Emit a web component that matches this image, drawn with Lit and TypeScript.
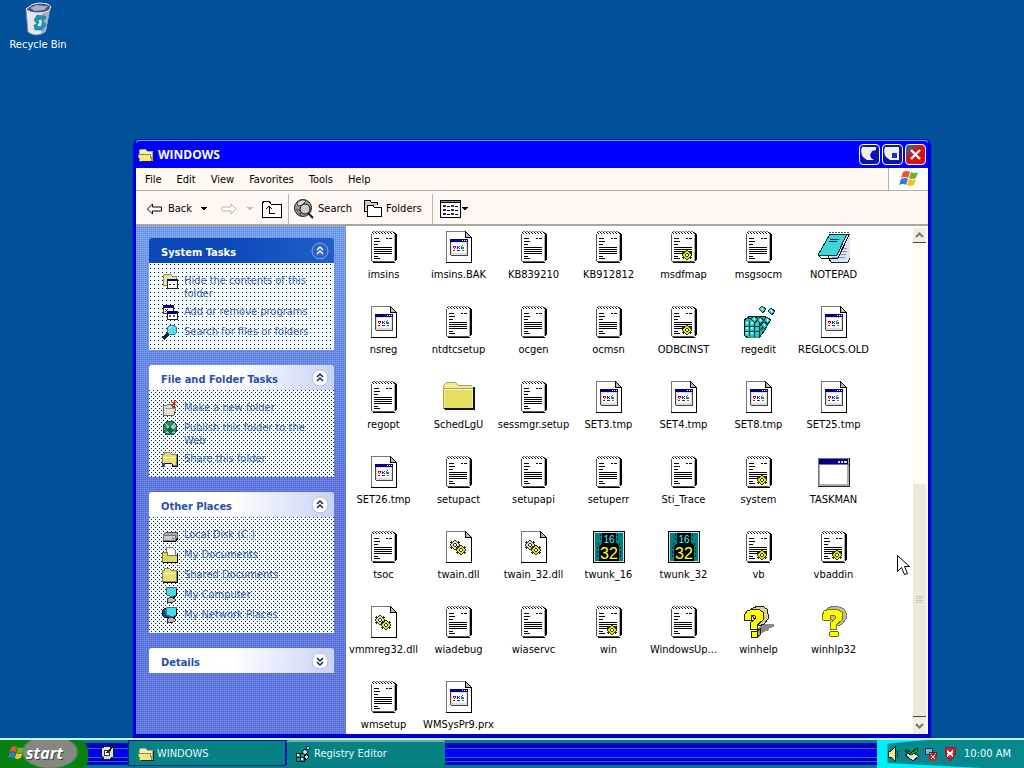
import { LitElement, html, svg, css, TemplateResult } from "lit";
import { customElement, property } from "lit/decorators.js";

const gear = (x: number, y: number, fill: string) => svg`
  <g transform="translate(${x} ${y})">
    <path d="M4 0h2v1h1v1h1v-1h1v1h1v1h-1v1h1v2h-1v1h1v1h-1v1h-1v-1h-1v1h-1v1h-2v-1h-1v-1h-1v1h-1v-1h-1v-1h1v-1h-1v-2h1v-1h-1v-1h1v-1h1v1h1v-1h1z" fill="#333300"/>
    <path d="M4 1h2v1h1v1h1v1h1v2h-1v1h-1v1h-1v1h-2v-1h-1v-1h-1v-1h-1v-2h1v-1h1v-1h1z" fill="${fill}"/>
    <path d="M4 3h2v1h1v2h-1v1h-2v-1h-1v-2h1z" fill="#333300"/>
    <path d="M4 4h2v2h-2z" fill="#fff"/>
  </g>`;

const notePage = svg`
  <path d="M3 3h24v27h-24z" fill="#fff"/>
  <path d="M3 3h1v27h-1zM4 30h22v1h-22z" fill="#555"/>
  <path d="M27 2h1v28h-1zM28 3h1v26h-1zM5 31h22v1h-22z" fill="#000"/>
  <path d="M26 4h1v26h-1z" fill="#aaa"/>
  <path d="M4 1h1v1h-1zM7 1h1v1h-1zM10 1h1v1h-1zM13 1h1v1h-1zM16 1h1v1h-1zM19 1h1v1h-1zM22 1h1v1h-1zM25 1h1v1h-1z
    M5 2h1v1h-1zM8 2h1v1h-1zM11 2h1v1h-1zM14 2h1v1h-1zM17 2h1v1h-1zM20 2h1v1h-1zM23 2h1v1h-1zM26 2h1v1h-1z" fill="#000"/>
  <path d="M5 0h2v1h-2zM8 0h2v1h-2zM11 0h2v1h-2zM14 0h2v1h-2zM17 0h2v1h-2zM20 0h2v1h-2zM23 0h2v1h-2zM26 1h1v1h-1z" fill="#777"/>
  <path d="M6 7h5v1h-5zM18 7h2v1h-2zM21 7h3v1h-3zM6 10h6v1h-6zM6 13h4v1h-4zM6 16h18v1h-18zM6 18h18v1h-18zM6 20h18v1h-18zM6 22h18v1h-18zM6 25h4v1h-4zM6 27h6v1h-6z" fill="#000"/>`;

const page = svg`
  <path d="M4 1h18l6 6v24h-24z" fill="#fff"/>
  <path d="M3 0h19v1h-18v30h-1z" fill="#777"/>
  <path d="M22 0h1v1h1v1h1v1h1v1h1v1h1v1h1v26h-26v-1h25v-24h-6z" fill="#000"/>
  <path d="M23 2h1v1h1v1h1v1h1v1h-4z" fill="#bbb"/>`;

const cube = (x: number, y: number) => svg`
  <path d="M${x} ${y + 3}l3-3l4 3l-3 4z" fill="#5cc" stroke="#044" stroke-width="1"/>
  <path d="M${x + 2} ${y + 3}l2-2v3z" fill="#dff"/>`;

const icons: Record<string, TemplateResult> = {
  text: notePage,
  config: svg`${notePage}${gear(14, 19, "#e6e600")}`,
  generic: svg`${page}
    <rect x="7" y="8" width="18" height="16" fill="#ddd"/>
    <path d="M7 8h18v3h-18z" fill="#000080"/>
    <path d="M19 9h1v1h-1zM21 9h1v1h-1zM23 9h1v1h-1z" fill="#fff"/>
    <rect x="9" y="12" width="14" height="10" fill="#fff"/>
    <path d="M7 11h1v13h-1zM24 11h1v14h-1zM8 24h17v1h-17z" fill="#444"/>
    <path d="M10 15h3v1h-3zM10 16h1v1h-1zM12 16h1v1h-1zM11 17h1v1h-1zM10 19h2v1h-2z" fill="#c00"/>
    <path d="M14 15h1v3h-1zM15 16h1v1h-1zM16 15h1v1h-1zM16 17h1v1h-1zM14 19h3v1h-3z" fill="#22c"/>
    <path d="M19 14h1v1h-1zM18 15h1v3h-1zM19 16h2v2h-2zM19 19h2v1h-2z" fill="#286"/>`,
  dll: svg`${page}${gear(7, 9, "#ddd")}${gear(13, 14, "#e2dc50")}`,
  folder: svg`
    <path d="M1 4h1v-1h1v-1h10v1h1v1h1v1h14v1h1v22h-29z" fill="#f0ee90"/>
    <path d="M2 8h27v19h-27z" fill="#e4df61"/>
    <path d="M0 4h1v24h-1zM1 3h1v1h-1zM2 2h1v1h-1zM3 1h10v1h-10zM13 2h1v1h-1zM14 3h1v1h-1zM15 4h14v1h-14zM1 7h29v1h-29z" fill="#a9a550"/>
    <path d="M30 6h2v22h-2zM2 28h30v1h-30zM1 27h29v1h-29z" fill="#111"/>
    <path d="M2 8h28v1h-28z" fill="#ffffc8"/>`,
  notepad: svg`
    <path d="M14 3h18v24l-2 4h-17l-3-5z" fill="#dde4f4" stroke="#222" stroke-width="1"/>
    <path d="M15 17h14M15 20h14M14 23h14M14 26h13" stroke="#88a" stroke-width="1"/>
    <path d="M12 3h17l-10 21h-19z" fill="#42d5d8" stroke="#033" stroke-width="1"/>
    <path d="M1 25l2 2h17l11-23" fill="none" stroke="#000" stroke-width="1"/>
    <path d="M12 8h9v1h-9zM11 10h8v1h-8z" fill="#024"/>
    <path d="M11 1h2v1h-2zM14 1h2v1h-2zM17 1h2v1h-2zM20 1h2v1h-2zM23 1h2v1h-2zM26 1h2v1h-2zM29 1h2v1h-2z" fill="#555"/>`,
  regedit: svg`
    <path d="M1 14l6-4h15v14l-6 8h-11l-4-3z" fill="#2aa7a8" stroke="#022" stroke-width="1"/>
    <path d="M2 15h14v15h-14z" fill="#37c4c4"/>
    <path d="M6 15v15M11 15v16M2 20h14M2 25h14M16 14v17M16 20l6-4M16 25l6-5M5 12h14" stroke="#044" stroke-width="1" fill="none"/>
    <path d="M3 16h2v2h-2zM8 16h2v2h-2zM3 21h2v2h-2zM8 21h2v2h-2zM3 26h2v2h-2zM8 26h2v2h-2z" fill="#8ff"/>
    ${cube(8, 10)}${cube(14, 11)}${cube(16, 0)}${cube(25, 2)}${cube(21, 11)}${cube(18, 16)}`,
  twunk: svg`
    <path d="M0 0h32v32h-32z" fill="#000"/>
    <path d="M1 1h30v30h-30z" fill="#cdd"/>
    <path d="M2 2h28v28h-28z" fill="#008080"/>
    <path d="M9 2h14v10l3 3v15h-20v-15l3-3z" fill="#000"/>
    <path d="M7 3h1v2h-1zM7 7h1v2h-1zM24 3h1v2h-1zM24 7h1v2h-1zM5 12h1v2h-1zM26 12h1v2h-1zM4 16h1v2h-1zM27 16h1v2h-1zM4 20h1v2h-1zM27 20h1v2h-1zM4 24h1v2h-1zM27 24h1v2h-1z" fill="#022"/>
    <text x="16" y="12" font-size="10" text-anchor="middle" fill="#4ff" font-family="Liberation Sans, sans-serif">16</text>
    <text x="16" y="28" font-size="16" text-anchor="middle" fill="#ff3" font-family="Liberation Sans, sans-serif">32</text>`,
  taskman: svg`
    <path d="M0 2h32v29h-32z" fill="#aaa"/>
    <path d="M1 3h29v5h-29z" fill="#000080"/>
    <path d="M20 5h2v2h-2zM23 5h2v2h-2zM26 5h3v2h-3z" fill="#ddd"/>
    <path d="M2 9h27v19h-27z" fill="#fff"/>
    <path d="M31 2h1v29h-1zM0 30h32v1h-32z" fill="#222"/>
    <path d="M0 2h1v28h-1zM1 2h30v1h-30zM1 8h30v1h-30z" fill="#777"/>`,
  help: svg`
    <path d="M13 23l9-5h9v3l-5 1v2l-10 4z" fill="#888"/>
    <path d="M6 5l4-3l5-2h4l5 3l1 5v5l-4 5l-5 2z" fill="#d4d49a" stroke="#222" stroke-width="1"/>
    <path d="M1 10l3-5l6-2h5l5 3l1 4l-1 4l-6 5v4h-7v-6l5-4v-3l-2-1l-2 1v4h-7z" fill="#ff0" stroke="#222" stroke-width="1"/>
    <path d="M8 25h6v6h-6z" fill="#ff0" stroke="#222" stroke-width="1"/>
    <path d="M14 25l3-2v6l-3 2z" fill="#998" stroke="#222" stroke-width="1"/>`,
  help32: svg`
    <path d="M6 6l4-4l5-2h4l7 3l2 4v6l-4 5l-4 2z" fill="#bdbda6" stroke="#777" stroke-width="1"/>
    <path d="M4 10l2-5l5-2h7l6 3l1 4l-1 4l-6 5v4h-6v-6l5-4v-3l-2-1l-3 1v4h-7z" fill="#ff0" stroke="#770" stroke-width="1"/>
    <ellipse cx="16" cy="28" rx="5" ry="3" fill="#ff0" stroke="#660"/>`,
};

const smallFolder = svg`
  <path d="M0 3h2v-2h5l2 2h5v11h-14z" fill="#e8e070" stroke="#886"/>
  <path d="M1 6h12" stroke="#ffc" fill="none"/>
  <path d="M15 4v11h-14" stroke="#000" fill="none"/>`;

const monitor = svg`
  <path d="M4 1l10-1v8l-3 2l-6-2z" fill="#3fe0f0" stroke="#567"/>
  <path d="M14 2v7l-3 2" fill="none" stroke="#000"/>
  <path d="M5 12l4-2l4 2v2l-4 2l-4-1z" fill="#bbb" stroke="#333"/>`;

const smallIcons: Record<string, TemplateResult> = {
  hide: svg`<path d="M1 3l2-2h5l2 2h4v9h-13z" fill="#e8e890" stroke="#886"/>
    <path d="M5 6h10v9h-10z" fill="#fff" stroke="#222"/><path d="M5 6h10v2h-10z" fill="#008"/>
    <path d="M7 11h2v1h-2zM11 11h2v1h-2z" fill="#222"/>`,
  programs: svg`<path d="M1 1h10v8h-10z" fill="#fff" stroke="#333"/><path d="M1 1h10v3h-10z" fill="#008"/>
    <path d="M3 5l3 3M6 5l-3 3" stroke="#c00"/><path d="M5 7h10v8h-10z" fill="#fff" stroke="#222"/>
    <path d="M5 7h10v3h-10z" fill="#008"/><path d="M7 11h2v2h-2z" fill="#c33"/><path d="M11 11h2v2h-2z" fill="#284"/>`,
  search: svg`<path d="M7 9l-6 6" stroke="#124" stroke-width="3"/><circle cx="10" cy="6" r="5" fill="#4fe0f0" stroke="#378"/>
    <path d="M7 5l3-3" stroke="#fff"/>`,
  newfolder: svg`<path d="M1 5h4l1-1h4v3h4l-2 8h-11z" fill="#e6e3d6" stroke="#665"/><path d="M3 8h11" stroke="#998"/>
    <path d="M12 0v7M9 1l6 5M15 1l-6 5" stroke="#d22"/>`,
  web: svg`<circle cx="8" cy="8" r="7" fill="#2b8f55" stroke="#254"/><path d="M3 3l5 4l5-4l1 4l-4 3l3 3h-9l2-4z" fill="#9cc"/>
    <path d="M4 10l4-3l4 3l-4 4z" fill="#175f33"/>`,
  share: svg`${smallFolder}<path d="M0 12h6l4 1v3h-10z" fill="#eef" stroke="#114"/><path d="M0 12h3v4h-3z" fill="#24a"/>`,
  disk: svg`<path d="M1 8l3-3h11v6l-2 2h-12z" fill="#aaa" stroke="#555"/><path d="M1 8h12v5h-12z" fill="#ccc" stroke="#777"/>
    <path d="M1 14h13l2-3" stroke="#000" fill="none"/><path d="M10 11h2v1h-2z" fill="#0a0"/>`,
  docs: svg`<path d="M4 0h6l3 3v6h-9z" fill="#fff" stroke="#777"/><path d="M0 6l2-1h3v3h10v7h-15z" fill="#e0d955" stroke="#775"/>
    <path d="M15 7v8h-14" stroke="#000" fill="none"/>`,
  shared: svg`${smallFolder}`,
  computer: svg`${monitor}`,
  network: svg`<circle cx="5" cy="6" r="5" fill="#124a90" stroke="#113"/><path d="M2 4l3-2v4z" fill="#3a4"/>${monitor}`,
};

const icon16 = (body: TemplateResult, size = 16) =>
  html`<svg width=${size} height=${size} viewBox="0 0 16 16" fill="none" shape-rendering="crispEdges" aria-hidden="true">${body}</svg>`;

@customElement("file-item")
class FileItem extends LitElement {
  @property() name = "";
  @property() kind = "text";
  static styles = css`
    :host { display: block; height: 75px; }
    button {
      display: flex; flex-direction: column; align-items: center; gap: 5px;
      width: 100%; padding: 0; border: 0; background: none; color: #000;
      font: 11px/14px "DejaVu Sans Condensed", "DejaVu Sans", sans-serif; white-space: nowrap;
    }
  `;
  render() {
    return html`<button>
      <svg width="32" height="32" viewBox="0 0 32 32" fill="none" shape-rendering="crispEdges" aria-hidden="true">${icons[this.kind]}</svg>
      <span>${this.name}</span>
    </button>`;
  }
}

@customElement("task-panel")
class TaskPanel extends LitElement {
  @property() heading = "";
  @property({ attribute: false }) links: string[][] = [];
  @property({ type: Boolean }) primary = false;
  static styles = css`
    :host { display: block; font: 11px/13px "DejaVu Sans Condensed", "DejaVu Sans", sans-serif; }
    .head {
      display: flex; align-items: center; justify-content: space-between;
      width: 100%; height: 25px; padding: 0 5px 0 12px; border: 0; border-radius: 3px 3px 0 0;
      background: linear-gradient(90deg, #fff 45%, #c6d3f7); color: #2a50a8;
      font: bold 11px/13px "DejaVu Sans Condensed", "DejaVu Sans", sans-serif; text-align: left;
    }
    .label { padding-top: 3px; }
    .primary .head { background: linear-gradient(90deg, #0b48b8 40%, #2160c8); color: #fff; }
    ul {
      display: flex; flex-direction: column; gap: 4px; margin: 0; padding: 10px 12px 10px 13px; list-style: none;
      background-color: #f6fdff;
      background-image:
        conic-gradient(from 270deg at 1px 1px, #102038 90deg, transparent 0),
        conic-gradient(from 270deg at 1px 1px, #102038 90deg, transparent 0);
      background-size: 4px 4px; background-position: 0 0, 2px 2px;
    }
    .primary ul {
      background-image: conic-gradient(from 270deg at 1px 1px, #101828 90deg, transparent 0);
      background-size: 4px 4px; background-position: 1px 1px;
    }
    a { display: flex; align-items: flex-start; gap: 6px; min-height: 16px; color: #3565b5; text-decoration: none; }
    a span { padding-top: 1px; }
    svg { flex: none; }
  `;
  render() {
    const open = this.links.length > 0;
    const arrow = open ? "M6 8l3-3l3 3M6 12l3-3l3 3" : "M6 6l3 3l3-3M6 10l3 3l3-3";
    return html`<section class=${this.primary ? "primary" : ""}>
      <button class="head" aria-expanded=${open}>
        <span class="label">${this.heading}</span>
        <svg width="18" height="20" viewBox="0 0 18 18" fill="none" aria-hidden="true">
          <circle cx="9" cy="9" r="8" fill=${this.primary ? "#2b62c8" : "#fff"} stroke=${this.primary ? "#86a8ea" : "#b4bfdc"}/>
          <path d=${arrow} stroke=${this.primary ? "#fff" : "#142850"} stroke-width="1.5"/>
        </svg>
      </button>
      ${open ? html`<ul>${this.links.map(([icon, text]) => html`<li><a href="#">${icon16(smallIcons[icon])}<span>${text}</span></a></li>`)}</ul>` : ""}
    </section>`;
  }
}

const files: string[][] = [
  ["imsins", "text"], ["imsins.BAK", "generic"], ["KB839210", "text"], ["KB912812", "text"], ["msdfmap", "config"], ["msgsocm", "text"], ["NOTEPAD", "notepad"],
  ["nsreg", "generic"], ["ntdtcsetup", "text"], ["ocgen", "text"], ["ocmsn", "text"], ["ODBCINST", "config"], ["regedit", "regedit"], ["REGLOCS.OLD", "generic"],
  ["regopt", "text"], ["SchedLgU", "folder"], ["sessmgr.setup", "text"], ["SET3.tmp", "generic"], ["SET4.tmp", "generic"], ["SET8.tmp", "generic"], ["SET25.tmp", "generic"],
  ["SET26.tmp", "generic"], ["setupact", "text"], ["setupapi", "text"], ["setuperr", "text"], ["Sti_Trace", "text"], ["system", "config"], ["TASKMAN", "taskman"],
  ["tsoc", "text"], ["twain.dll", "dll"], ["twain_32.dll", "dll"], ["twunk_16", "twunk"], ["twunk_32", "twunk"], ["vb", "config"], ["vbaddin", "config"],
  ["vmmreg32.dll", "dll"], ["wiadebug", "text"], ["wiaservc", "text"], ["win", "config"], ["WindowsUp...", "text"], ["winhelp", "help"], ["winhlp32", "help32"],
  ["wmsetup", "text"], ["WMSysPr9.prx", "generic"],
];

const systemTasks = [["hide", "Hide the contents of this folder"], ["programs", "Add or remove programs"], ["search", "Search for files or folders"]];
const folderTasks = [["newfolder", "Make a new folder"], ["web", "Publish this folder to the Web"], ["share", "Share this folder"]];
const places = [["disk", "Local Disk (C:)"], ["docs", "My Documents"], ["shared", "Shared Documents"], ["computer", "My Computer"], ["network", "My Network Places"]];

const flag = (w: number, h: number) => html`<svg width=${w} height=${h} viewBox="0 0 20 18" aria-hidden="true">
  <path d="M4 2q4-2 7 0l-2 6q-3-2-7 0z" fill="#e8542c"/><path d="M12 2q4 2 7 0l-2 6q-4 2-7 0z" fill="#6ab42c"/>
  <path d="M2 9q4-2 7 0l-2 6q-3-2-7 0z" fill="#3a78d8"/><path d="M10 9q3 2 7 0l-2 6q-4 2-7 0z" fill="#f4c020"/></svg>`;

const openFolder = svg`<path d="M1 4l2-2h4l2 2h5v9h-13z" fill="#f4f0b0" stroke="#aa8"/><path d="M0 7h12l2 7h-12z" fill="#f0ea80" stroke="#885"/>
  <path d="M15 5v9h-12" stroke="#223"/>`;

const caret = (color: string) => html`<svg width="6" height="4" viewBox="0 0 6 4" shape-rendering="crispEdges" aria-hidden="true"><path d="M0 0h6v1h-1v1h-1v1h-2v-1h-1v-1h-1z" fill=${color}/></svg>`;

@customElement("app-root")
class AppRoot extends LitElement {
  static styles = css`
    :host {
      display: flex; flex-direction: column; height: 100vh; overflow: hidden;
      background: #00509a; color: #000; font: 11px/14px "DejaVu Sans Condensed", "DejaVu Sans", sans-serif;
    }
    * { box-sizing: border-box; }
    button { padding: 0; border: 0; background: none; color: inherit; font: inherit; }
    svg { flex: none; }
    .desktop { position: relative; flex: 1; min-height: 0; }
    .bin { display: flex; flex-direction: column; align-items: center; gap: 2px; width: 76px; padding-top: 2px; color: #fff; }
    .window {
      position: absolute; inset: 139px 93px 0 133px; display: flex; flex-direction: column;
      border: 3px solid #0000e0; border-top: 1px solid #0000c0; border-bottom: 4px solid #0000c8;
      border-radius: 6px 6px 0 0; background: #fff;
    }
    .title {
      display: flex; align-items: center; gap: 2px; height: 28px; padding: 0 2px;
      border-top: 1px solid #4da6ff; border-radius: 4px 4px 0 0; background: #0000ff; color: #fff;
    }
    .title h1 { flex: 1; margin: 0 0 0 2px; font: bold 12px/16px "Open Sans", sans-serif; }
    .ctl { width: 21px; height: 21px; border: 1px solid #fff; border-radius: 4px; background: #0a14b8; overflow: hidden; }
    .close { background: linear-gradient(135deg, #4a5a80 15%, #d81010 45%); }
    .menu { display: flex; align-items: stretch; height: 23px; border-bottom: 1px solid #b4b2ac; background: #fff9f1; }
    .menu nav { flex: 1; display: flex; gap: 15px; padding: 1px 0 0 9px; }
    .brand { display: flex; align-items: center; justify-content: center; width: 40px; border-left: 1px solid #b4b2ac; background: #fff; }
    .tools { display: flex; align-items: center; height: 35px; border-bottom: 2px solid #aaa69e; background: #fff7f1; padding: 2px 0 0 10px; }
    .tool { display: flex; align-items: center; gap: 4px; }
    .back { gap: 5px; margin-right: 9px; }
    .forward { margin: 0 10px 0 14px; }
    .up { margin-left: 8px; }
    .sep { align-self: stretch; width: 1px; margin: 1px 5px 0 6px; background: #bbb8b0; }
    .folders { margin-left: 11px; }
    .views { gap: 1px; margin-left: 2px; }
    .sep.wide { margin-left: 10px; }
    .body { flex: 1; display: flex; min-height: 0; }
    .side {
      display: flex; flex-direction: column; gap: 15px; width: 210px; padding: 12px 12px 0 13px;
      background-image:
        conic-gradient(from 270deg at 1px 1px, #ffffff28 90deg, transparent 0),
        conic-gradient(from 270deg at 1px 1px, #0038e030 90deg, transparent 0),
        linear-gradient(#75a0ec, #6078de 50%, #6078dc);
      background-size: 2px 2px, 2px 2px, auto; background-position: 0 0, 1px 1px, 0 0;
    }
    .files { flex: 1; display: grid; grid-template-columns: repeat(auto-fill, 75px); align-content: start; padding-top: 5px; overflow: hidden; }
    .scroll { display: flex; flex-direction: column; width: 15px; padding: 2px 2px 0 0; background: #fffaf2; }
    .scroll button { display: flex; align-items: center; justify-content: center; height: 15px; background: #efece0; }
    .scroll .top { border-bottom: 1px solid #444; }
    .scroll .bottom { border-top: 1px solid #444; height: 18px; }
    .track { flex: 1; display: flex; flex-direction: column; justify-content: flex-end; }
    .thumb { display: flex; align-items: center; justify-content: center; height: 49%; background: #ece9d8; }
    .cursor { position: absolute; left: 897px; top: 555px; }

    .taskbar {
      display: flex; height: 30px; border-top: 2px solid #c4f4ff;
      background: linear-gradient(#087a8c 3px, #0000b8 3px 8px, #2a62f0 8px 9px, #0000f0 9px 17px, #1e6cd0 17px 18px,
        #0000b0 18px 21px, #2a62e0 21px 22px, #0000d8 22px 25px, #087a80 25px);
    }
    .start {
      display: flex; align-items: center; gap: 1px; width: 88px; padding: 0 0 2px 8px; border-radius: 0 10px 8px 0;
      background: radial-gradient(ellipse 29px 17px at 50px 12px, #848880 90%, transparent), #078010;
      color: #fff; font: italic bold 16px/20px "Open Sans", sans-serif; text-shadow: 1px 1px #444;
    }
    .quick { display: flex; align-items: center; justify-content: center; width: 40px; }
    .task {
      display: flex; align-items: center; gap: 3px; flex: 0 1 158px; height: 26px; padding-left: 8px; margin-right: 1px;
      background: #078284; color: #e4f8ff;
    }
    .task.active { border: 1px solid #001a90; padding: 2px 0 0 9px; }
    .task.next { border-top: 2px solid #6ab0b0; border-radius: 3px 3px 0 0; }
    .tray {
      display: flex; align-items: center; gap: 3px; margin-left: auto; padding: 0 13px 0 8px;
      background: linear-gradient(175deg, #00f0f8 4px, transparent 5px), linear-gradient(3deg, #00f0f8 5px, transparent 6px),
        linear-gradient(90deg, #00f0f8 10px, #07888c 11px);
      color: #e8ffff;
    }
    .tray time { margin-left: 3px; }
  `;

  render() {
    return html`
      <main class="desktop">
        <div class="bin">
          <svg width="32" height="34" viewBox="0 0 32 34" aria-hidden="true">
            <path d="M4 7l2 23q8 6 17 0l5-23z" fill="#e4e6f0" stroke="#8b93ac"/>
            <path d="M20 11l8-4l-4 22l-5 3z" fill="#a6adca"/>
            <path d="M4 7q6-6 13-6q10 0 12 4q-2 6-13 6q-9 0-12-4z" fill="#4e5478" stroke="#eef"/>
            <path d="M8 6l7-3l6 1l5 0l-4 4l-9 1z" fill="#a8aecb"/>
            <path d="M23 14l-8-1l-3 5l3 4l2-1l-1-3l4-1v3l4-4zM12 23l1 5h7l4-5l-2-3l-2 1v3l-4 1l-1-3z" fill="#1698b8" stroke="#0a6d98" stroke-width=".5"/>
          </svg>
          <span>Recycle Bin</span>
        </div>

        <section class="window">
          <header class="title">
            ${icon16(openFolder)}
            <h1>WINDOWS</h1>
            <button class="ctl" aria-label="Minimize"><svg width="19" height="19" viewBox="0 0 19 19" aria-hidden="true"><path d="M2 2h14v3l-4 1l-2 4l1 3l3 2h-7l-4-3q-3-5-1-10z" fill="#f2f0e6"/></svg></button>
            <button class="ctl" aria-label="Maximize"><svg width="19" height="19" viewBox="0 0 19 19" aria-hidden="true"><path d="M2 2h14v13h-9l-4-3q-3-5-1-10z" fill="#f2f0e6"/><path d="M9 8h5v5h-5z" fill="#0a38c0"/></svg></button>
            <button class="ctl close" aria-label="Close"><svg width="19" height="19" viewBox="0 0 19 19" aria-hidden="true"><path d="M5 5l9 9M14 5l-9 9" stroke="#fff" stroke-width="2.4"/></svg></button>
          </header>

          <div class="menu">
            <nav>${["File", "Edit", "View", "Favorites", "Tools", "Help"].map((m) => html`<button>${m}</button>`)}</nav>
            <div class="brand">${flag(20, 18)}</div>
          </div>

          <div class="tools">
            <button class="tool back">
              <svg width="17" height="14" viewBox="0 0 17 14" fill="#fff" aria-hidden="true"><path d="M1.500 7l5-5v3h9v4h-9v3z" stroke="#000"/></svg>Back
            </button>
            ${caret("#000")}
            <button class="tool forward" aria-label="Forward" disabled>
              <svg width="16" height="14" viewBox="0 0 16 14" fill="#fff" aria-hidden="true"><path d="M15 7l-5-5v3h-9v4h9v3z" stroke="#b8b4a8"/></svg>
            </button>
            ${caret("#c4c0b4")}
            <button class="tool up" aria-label="Up">
              <svg width="21" height="20" viewBox="0 0 21 20" fill="none" shape-rendering="crispEdges" aria-hidden="true">
                <path d="M1 18v-13l2-3h5l2 3h10v13z" fill="#fff" stroke="#000"/><path d="M14 14h-6v-7M5 10l3-3l3 3" stroke="#000"/></svg>
            </button>
            <span class="sep"></span>
            <button class="tool search">
              <svg width="20" height="21" viewBox="0 0 20 21" fill="none" aria-hidden="true">
                <circle cx="9" cy="10" r="8.500" fill="#999" stroke="#222"/><path d="M3 5q5-5 9-2l-4 4l-4 1zM2 11l4 2l1 5z" fill="#ddd" stroke="#444"/>
                <circle cx="11" cy="11" r="5" fill="#ccc" stroke="#111"/><path d="M14 15l5 5" stroke="#111" stroke-width="2"/></svg>Search
            </button>
            <button class="tool folders">
              <svg width="19" height="19" viewBox="0 0 19 19" fill="none" shape-rendering="crispEdges" aria-hidden="true">
                <path d="M1 12v-9l1-2h5l1 2h6v3" stroke="#000" fill="#ccc"/><path d="M1 12h4" stroke="#000"/>
                <path d="M4 17v-9l1-2h5l1 2h7v9z" fill="#fff" stroke="#000"/></svg>Folders
            </button>
            <span class="sep wide"></span>
            <button class="tool views" aria-label="Views">
              <svg width="21" height="18" viewBox="0 0 21 18" fill="none" shape-rendering="crispEdges" aria-hidden="true">
                <path d="M0 0h21v18h-21z" fill="#000"/><path d="M1 3h19v14h-19z" fill="#fff"/><path d="M1 1h19v1h-19z" fill="#888"/>
                <path d="M3 5h3v2h-3zM3 9h3v2h-3zM3 13h3v2h-3zM11 5h3v2h-3zM11 9h3v2h-3zM11 13h3v2h-3z" fill="#333"/>
                <path d="M7 6h3v1h-3zM7 10h3v1h-3zM7 14h3v1h-3zM15 6h3v1h-3zM15 10h3v1h-3zM15 14h3v1h-3z" fill="#000"/></svg>
              ${caret("#000")}
            </button>
          </div>

          <div class="body">
            <aside class="side">
              <task-panel heading="System Tasks" primary .links=${systemTasks}></task-panel>
              <task-panel heading="File and Folder Tasks" .links=${folderTasks}></task-panel>
              <task-panel heading="Other Places" .links=${places}></task-panel>
              <task-panel heading="Details"></task-panel>
            </aside>
            <div class="files">${files.map(([n, k]) => html`<file-item name=${n} kind=${k}></file-item>`)}</div>
            <div class="scroll">
              <button class="top" aria-label="Scroll up"><svg width="9" height="6" viewBox="0 0 9 6" fill="none" aria-hidden="true"><path d="M1 5l3.500-3.500l3.500 3.500" stroke="#777" stroke-width="2"/></svg></button>
              <div class="track"><div class="thumb"><svg width="7" height="8" viewBox="0 0 7 8" shape-rendering="crispEdges" aria-hidden="true"><path d="M0 0h7v1h-7zM0 2h7v1h-7zM0 4h7v1h-7zM0 6h7v1h-7z" fill="#c8c8b4"/></svg></div></div>
              <button class="bottom" aria-label="Scroll down"><svg width="9" height="6" viewBox="0 0 9 6" fill="none" aria-hidden="true"><path d="M1 1l3.500 3.500l3.500-3.500" stroke="#777" stroke-width="2"/></svg></button>
            </div>
          </div>
        </section>

        <svg class="cursor" width="13" height="21" viewBox="0 0 13 21" aria-hidden="true">
          <path d="M.5 .5v16l4-4l3 7l3-1l-3-7h5z" fill="#fff" stroke="#000"/></svg>
      </main>

      <footer class="taskbar">
        <button class="start">${flag(17, 18)}start</button>
        <div class="quick">
          <button aria-label="Show Desktop">${icon16(svg`<path d="M2 4l3-2h8v11l-3 2h-6l-3-4z" fill="#ddd" stroke="#222"/><circle cx="7" cy="9" r="3" fill="#fff" stroke="#333"/><path d="M7 9l7-8" stroke="#222" stroke-width="2"/>`)}</button>
        </div>
        <button class="task active">${icon16(openFolder)}WINDOWS</button>
        <button class="task next">${icon16(svg`<path d="M1 7h8v8h-8z" fill="#299" stroke="#011"/><path d="M1 11h8M5 7v8" stroke="#011"/><path d="M2 8h2v2h-2zM6 12h2v2h-2z" fill="#cff"/><path d="M7 6l3-3l3 3l-3 3zM11 2l2-2l2 2l-2 2zM9 10l3-2l2 3l-3 3z" fill="#bdd" stroke="#011"/>`)}Registry Editor</button>
        <div class="tray">
          ${icon16(svg`<path d="M3 5h3l4-4v14l-4-4h-3z" fill="#e8e890" stroke="#221"/><path d="M12 5v6" stroke="#022"/>`)}
          ${icon16(svg`<path d="M1 9l7-3l7 4l-6 5z" fill="#e4e4e4" stroke="#222"/><path d="M2 3l5 4l6-5v4l-6 3l-6-4z" fill="#1a2" stroke="#031"/>`)}
          ${icon16(svg`<path d="M2 2h7v6h-7z" fill="#78b8e0" stroke="#234"/><path d="M6 6h7v6h-7z" fill="#ccd" stroke="#234"/><circle cx="10" cy="11" r="4" fill="#c22"/><path d="M8 9l4 4M12 9l-4 4" stroke="#fff"/>`)}
          ${icon16(svg`<path d="M3 2l5-1l5 1v7l-5 6l-5-6z" fill="#d41c2c" stroke="#822"/><path d="M5 5l6 5M11 5l-6 5" stroke="#fff" stroke-width="2"/>`)}
          <time>10:00 AM</time>
        </div>
      </footer>`;
  }
}
